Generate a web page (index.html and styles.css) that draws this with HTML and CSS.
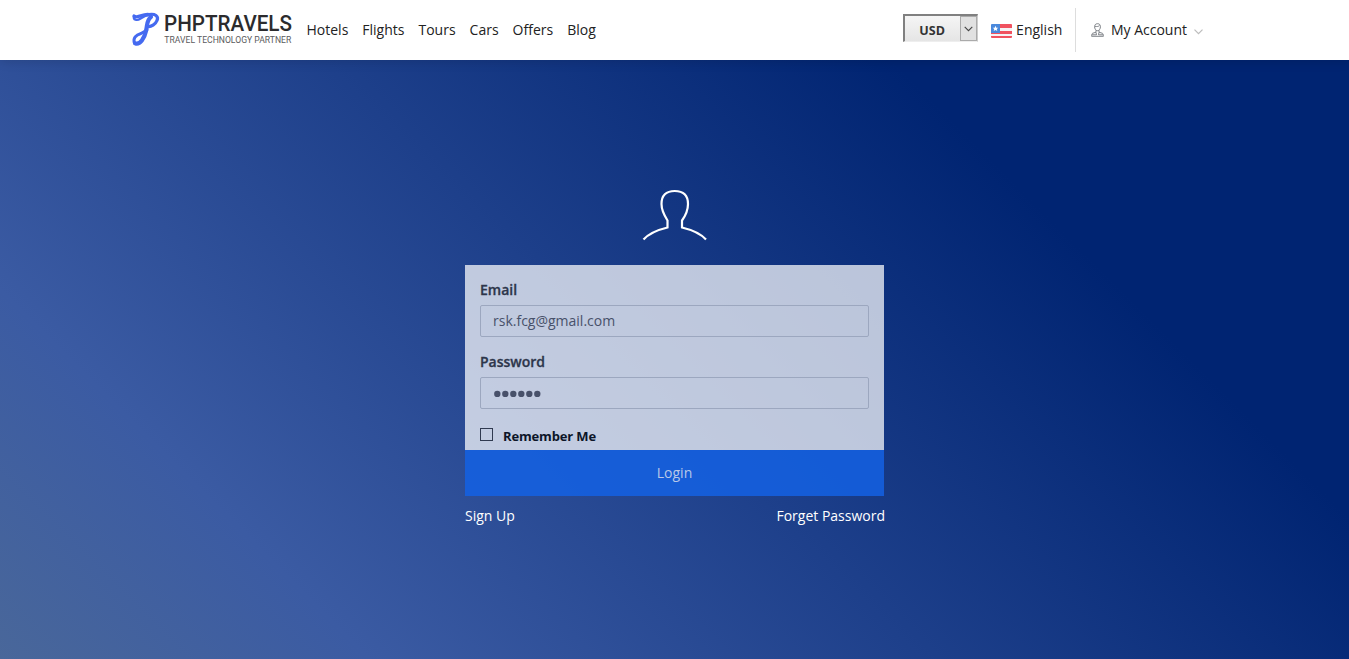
FILE: index.html
```html
<!DOCTYPE html>
<html lang="en">
<head>
<meta charset="utf-8">
<title>Login</title>
<link rel="stylesheet" href="styles.css">
</head>
<body>
<header class="header">
  <a class="logo" aria-label="PHPTRAVELS">
    <svg width="164" height="40" viewBox="0 0 164 40">
      <g fill="none" stroke="#456af0" stroke-linecap="round" stroke-linejoin="round">
        <path stroke-width="3.200" d="M2 6C6 9 10 3.500 17 4.500C23 3.500 27 6 25 10.500C23.500 14.500 19 17 16 16.500"/>
        <path stroke-width="2.400" d="M2 6C1 10 5 11 8.500 8.500C12 6 14 5 18 5"/>
        <path stroke-width="4.200" d="M19 7C14.500 10 15.500 15 14 21C12.500 28 8 35 3.500 33.500"/>
        <path stroke-width="2.900" d="M2.500 33.500C.500 28 4 25 9 23.500L15 20"/>
      </g>
      <text class="logo-name" x="32" y="21.300" textLength="128" lengthAdjust="spacingAndGlyphs">PHPTRAVELS</text>
      <text class="logo-tag" x="32.300" y="33" textLength="127" lengthAdjust="spacingAndGlyphs">TRAVEL TECHNOLOGY PARTNER</text>
    </svg>
  </a>
  <nav class="nav"><a>Hotels</a><a>Flights</a><a>Tours</a><a>Cars</a><a>Offers</a><a>Blog</a></nav>
  <div class="tools">
    <div class="currency"><span class="currency-name">USD</span>
      <span class="currency-arrow"><svg width="9" height="6" viewBox="0 0 9 6"><path d="M.7.9 4.500 4.700 8.300.9" fill="none" stroke="#444" stroke-width="1.100"/></svg></span>
    </div>
    <div class="language">
      <svg class="flag" width="21" height="14" viewBox="0 0 21 14"><rect width="21" height="14" rx="1" fill="#f5f3f5"/><path d="M9 0h11a1 1 0 0 1 1 1v3H9zM9 7h12v3H0V9h9zM0 12h21v1a1 1 0 0 1-1 1H1a1 1 0 0 1-1-1z" fill="#f0525f"/><path d="M1 0h8v9H0V1a1 1 0 0 1 1-1z" fill="#4a89dc"/><path d="m4.500 1.800.8 1.900 2 .1-1.500 1.300.5 2-1.800-1.100-1.800 1.100.5-2-1.500-1.300 2-.1z" fill="#fff"/></svg>
      <span>English</span>
    </div>
    <div class="account">
      <svg class="account-icon" width="13" height="14" viewBox="0 0 13 14" fill="none" stroke="#70757a"><path d="M6.500.7C4.500.7 3.600 2 3.600 3.800S4.700 7.700 6.500 7.700 9.400 5.800 9.400 3.800 8.500.7 6.500.7zM5 7.200v2L1.600 10.300C.7 10.800.6 12 .6 13.300h11.800c0-1.300-.1-2.500-1-3L8 9.200v-2M1 11.800h4.500L5 9.300M12 11.800H7.500L8 9.300M4 3.300c2 .5 3.500.2 4.500-.8" stroke-width=".9"/></svg>
      <span>My Account</span>
      <svg class="account-arrow" width="9" height="6" viewBox="0 0 9 6"><path d="M.5.7 4.500 4.700 8.500.7" fill="none" stroke="#bcbcbc" stroke-width="1.200"/></svg>
    </div>
  </div>
</header>
<main class="page">
  <svg class="avatar" width="66" height="52" viewBox="0 0 66 52"><path d="M1.500 50.500C7 44.500 15 41 25.500 38.500V31.500C22 26 19.500 20.500 19.500 15C19.500 6.500 24 2 32.700 2S46 6.500 46 15C46 20.500 44 26 40 31.500V38.500C50.500 41 58.500 44.500 64 50.500" fill="none" stroke="#fff" stroke-width="2.200"/></svg>
  <form class="login">
    <div class="panel">
      <label class="label">Email</label>
      <div class="field">rsk.fcg@gmail.com</div>
      <label class="label label-next">Password</label>
      <div class="field"><svg width="49" height="8" viewBox="0 0 49 8" fill="#48516a"><circle cx="4.300" cy="5" r="3.200"/><circle cx="12.300" cy="5" r="3.200"/><circle cx="20.300" cy="5" r="3.200"/><circle cx="28.300" cy="5" r="3.200"/><circle cx="36.300" cy="5" r="3.200"/><circle cx="44.300" cy="5" r="3.200"/></svg></div>
      <div class="remember"><span class="box"></span><span>Remember Me</span></div>
    </div>
    <div class="submit">Login</div>
    <div class="links"><a>Sign Up</a><a>Forget Password</a></div>
  </form>
</main>
</body>
</html>
```
FILE: styles.css
```css
* { box-sizing: border-box; }
body { margin: 0; height: 659px; overflow: hidden; font: 14px/20px "Open Sans", sans-serif; color: #222; display: flex; flex-direction: column; }
.header { height: 60px; flex: none; background: #fff; display: flex; align-items: center; padding: 0 146px 0 132px; position: relative; box-shadow: 0 2px 10px rgba(0, 0, 0, .12); }
.logo { display: flex; width: 164px; }
.logo svg { overflow: visible; }
.logo-name { font: 500 21.800px/28px Roboto, sans-serif; fill: #2b2b2d; }
.logo-tag { font: 400 9.200px/12px Roboto, sans-serif; fill: #5b5b5d; }
.nav { display: flex; gap: 14px; margin-left: 10.500px; }
.tools { display: flex; align-items: center; margin-left: auto; height: 44px; }
.currency { width: 75px; height: 28px; margin-right: 13px; margin-top: -4px; display: flex; background: linear-gradient(#f5f5f5, #e5e5e5); border: solid #808080; border-width: 2px 1px 0 2px; border-right-color: #ccc; border-bottom: 1px solid #eee; }
.currency-name { flex: 1; text-align: center; font-weight: 700; font-size: 12.500px; line-height: 29px; color: #333; }
.currency-arrow { width: 17px; border: 1px solid #aaa; background: #e1e1e1; display: flex; align-items: center; justify-content: center; }
.language { height: 44px; display: flex; align-items: center; gap: 4.500px; padding-right: 12.500px; border-right: 1px solid #ddd; }
.flag { margin-top: 2px; }
.account { display: flex; align-items: center; padding-left: 15px; }
.account-icon { margin-right: 7px; }
.account-arrow { margin: 4px 0 0 7px; }
.page { flex: 1; display: flex; flex-direction: column; align-items: center; padding-top: 129px; background: linear-gradient(45deg, #49679a 0%, #3b5ba3 19%, #002472 76.500%, #002472 100%); }
.avatar { display: block; }
.login { width: 419px; margin-top: 24px; }
.panel { height: 185px; background: rgba(255, 255, 255, .72); padding: 15px 15px 0; }
.label { display: block; font-weight: 600; color: #2d364b; -webkit-text-stroke: .3px #2d364b; }
.label-next { margin-top: 15px; }
.field { height: 32px; margin-top: 5px; border: 1px solid #9ca7bf; border-radius: 2px; padding-left: 12px; display: flex; align-items: center; color: #48516a; }
.remember { display: flex; align-items: center; gap: 10px; margin-top: 17px; font-size: 13px; font-weight: 700; letter-spacing: -.15px; color: #0c1528; }
.box { width: 13px; height: 13px; border: 1px solid #303a50; margin-top: -4px; }
.submit { height: 46px; line-height: 46px; text-align: center; color: #b9c8e8; background: rgba(20, 98, 228, .85); }
.links { display: flex; justify-content: space-between; color: #fff; padding-top: 10px; margin-right: -1px; }
```
